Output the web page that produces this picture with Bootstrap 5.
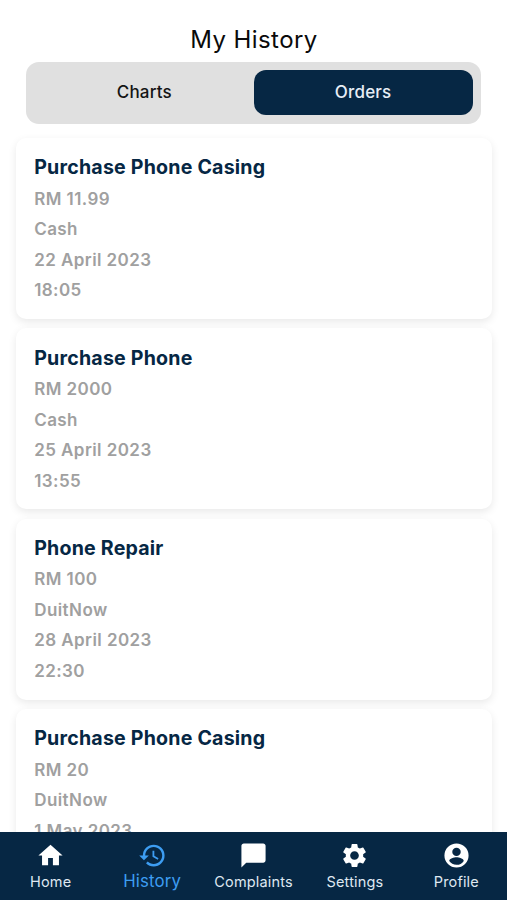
<!DOCTYPE html>
<html lang="en">
<head>
<meta charset="utf-8">
<meta name="viewport" content="width=device-width, initial-scale=1">
<title>My History</title>
<link href="https://cdn.jsdelivr.net/npm/bootstrap@5.3.0/dist/css/bootstrap.min.css" rel="stylesheet">
<style>
  :root { --navy: #062744; }
  body { font-family: Inter, "Liberation Sans", sans-serif; background: #fff; }
  .page-title { font-size: 24px; line-height: 30px; letter-spacing: .4px; padding: 25px 0 0 1px; margin-bottom: 7px; color: #0a0a0a; font-weight: 400; }
  .switcher { background: #e0e0e0; border-radius: 13px; margin: 0 26px; height: 62px; padding: 8px 8.5px 9px 9px; }
  .switcher .btn { font-size: 17px; font-weight: 500; letter-spacing: .2px; line-height: 24px; border: 0; border-radius: 12px; color: #141414; padding: 0 0 2px; }
  .switcher .btn.active { background: var(--navy); color: #e6eef6; }
  .orders { padding: 14px 15.5px 0; gap: 9.3px; }
  .order { height: 181px; border: 0; border-radius: 10px; padding: 14.3px 18.7px; box-shadow: 0 3px 8px rgba(0,0,0,.09); }
  .order h2 { font-size: 19.6px; font-weight: 650; line-height: 30px; letter-spacing: .2px; color: var(--navy); margin: 0 0 1.6px; }
  .order p { font-size: 17px; font-weight: 600; line-height: 30.5px; letter-spacing: .43px; color: #a0a0a0; margin: 0; }
  .tabs { background: var(--navy); height: 68.5px; }
  .tabs a { color: #dfe8f1; font-size: 14.5px; line-height: 20px; letter-spacing: .15px; padding: 9px 0 0; text-decoration: none; }
  .tabs svg { width: 29px; height: 29px; fill: #fff; margin-bottom: 2px; }
  .tabs a.current { color: #3d9df2; font-size: 16.8px; line-height: 18px; }
  .tabs a.current svg { fill: #3d9df2; }
</style>
<script src="https://cdn.jsdelivr.net/npm/bootstrap@5.3.0/dist/js/bootstrap.bundle.min.js"></script>
</head>
<body>
<div class="d-flex flex-column vh-100 overflow-hidden">
  <header class="flex-shrink-0">
    <h1 class="page-title text-center">My History</h1>
    <div class="switcher d-flex">
      <button class="btn w-50" type="button">Charts</button>
      <button class="btn w-50 active" type="button">Orders</button>
    </div>
  </header>
  <main class="orders flex-grow-1 overflow-hidden d-flex flex-column">
    <article class="order card flex-shrink-0">
      <h2>Purchase Phone Casing</h2>
      <p>RM 11.99</p><p>Cash</p><p>22 April 2023</p><p>18:05</p>
    </article>
    <article class="order card flex-shrink-0">
      <h2>Purchase Phone</h2>
      <p>RM 2000</p><p>Cash</p><p>25 April 2023</p><p>13:55</p>
    </article>
    <article class="order card flex-shrink-0">
      <h2>Phone Repair</h2>
      <p>RM 100</p><p>DuitNow</p><p>28 April 2023</p><p>22:30</p>
    </article>
    <article class="order card flex-shrink-0">
      <h2>Purchase Phone Casing</h2>
      <p>RM 20</p><p>DuitNow</p><p>1 May 2023</p>
    </article>
  </main>
  <nav class="tabs d-flex flex-shrink-0">
    <a href="#" class="col d-flex flex-column align-items-center">
      <svg viewBox="0 0 24 24"><path d="M10 20v-6h4v6h5v-8h3L12 3 2 12h3v8z"/></svg>Home</a>
    <a href="#" class="current col d-flex flex-column align-items-center">
      <svg viewBox="0 0 24 24"><path d="M13 3a9 9 0 0 0-9 9H1l3.89 3.89.07.14L9 12H6c0-3.87 3.13-7 7-7s7 3.13 7 7-3.13 7-7 7c-1.93 0-3.68-.79-4.94-2.06l-1.42 1.42A8.954 8.954 0 0 0 13 21a9 9 0 0 0 0-18zm-1 5v5l4.28 2.54.72-1.21-3.5-2.08V8z"/></svg>History</a>
    <a href="#" class="col d-flex flex-column align-items-center">
      <svg viewBox="0 0 24 24"><path d="M20 2H4c-1.100 0-2 .9-2 2v18l4-4h14c1.100 0 2-.9 2-2V4c0-1.100-.9-2-2-2z"/></svg>Complaints</a>
    <a href="#" class="col d-flex flex-column align-items-center">
      <svg viewBox="0 0 24 24"><path d="M19.140 12.940c.04-.3.06-.61.06-.94 0-.32-.02-.64-.07-.94l2.030-1.580a.49.49 0 0 0 .12-.61l-1.920-3.320a.488.488 0 0 0-.59-.22l-2.390.96c-.5-.38-1.030-.7-1.620-.94l-.36-2.540a.484.484 0 0 0-.48-.41h-3.840c-.24 0-.43.17-.47.41l-.36 2.540c-.59.24-1.130.57-1.620.94l-2.390-.96c-.22-.08-.47 0-.59.22L2.740 8.870c-.12.21-.08.47.12.61l2.030 1.580c-.05.3-.09.63-.09.94s.02.64.07.94l-2.030 1.580a.49.49 0 0 0-.12.61l1.920 3.320c.12.22.37.29.59.22l2.390-.96c.5.38 1.030.7 1.620.94l.36 2.540c.05.24.24.41.48.41h3.840c.24 0 .44-.17.47-.41l.36-2.540c.59-.24 1.130-.56 1.620-.94l2.390.96c.22.08.47 0 .59-.22l1.920-3.320c.12-.22.07-.47-.12-.61l-2.010-1.580zM12 15.600c-1.980 0-3.600-1.620-3.600-3.600s1.620-3.600 3.600-3.600 3.600 1.620 3.600 3.600-1.620 3.600-3.600 3.600z"/></svg>Settings</a>
    <a href="#" class="col d-flex flex-column align-items-center">
      <svg viewBox="0 0 24 24"><path d="M12 2a10 10 0 1 0 0 20 10 10 0 0 0 0-20zm0 3.500a3.500 3.500 0 1 1 0 7 3.500 3.500 0 0 1 0-7zm0 14.200c-2.500 0-4.710-1.280-6-3.220.03-1.990 4-3.080 6-3.080s5.970 1.090 6 3.080a7.200 7.200 0 0 1-6 3.220z"/></svg>Profile</a>
  </nav>
</div>
</body>
</html>
